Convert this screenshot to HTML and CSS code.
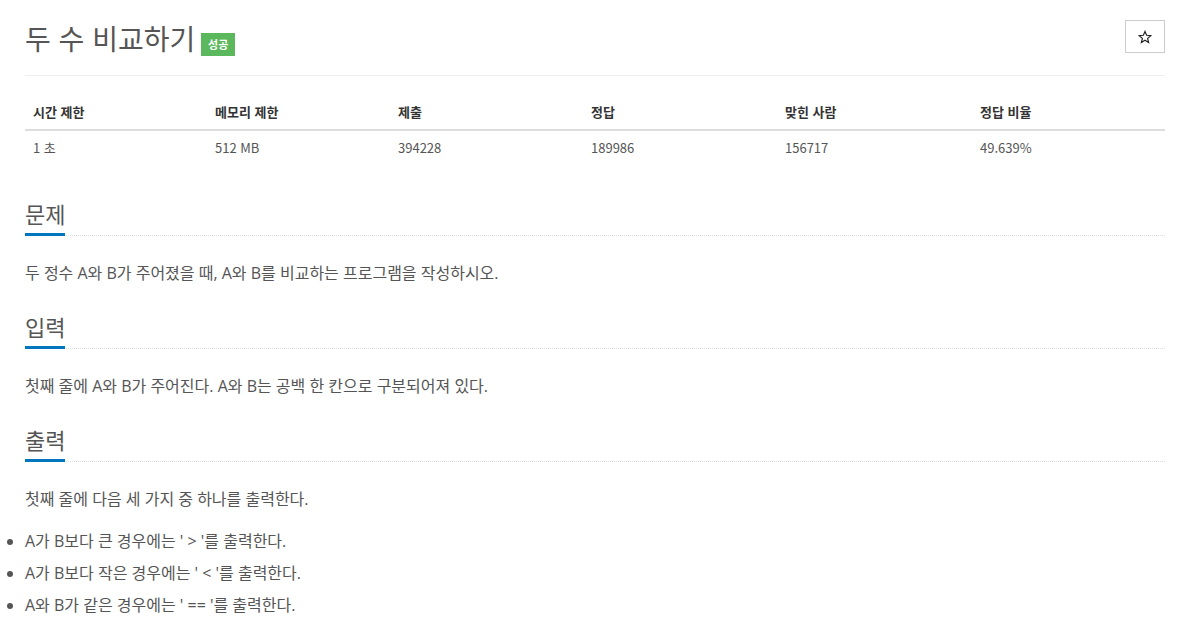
FILE: index.html
```html
<!DOCTYPE html>
<html lang="ko">
<head>
<meta charset="utf-8">
<title>두 수 비교하기</title>
<link rel="stylesheet" href="styles.css">
</head>
<body>
<div class="container">
  <div class="page-header">
    <h1 class="title">두 수 비교하기 <span class="badge">성공</span></h1>
    <button class="star-btn" type="button" aria-label="star">
      <svg width="14" height="14" viewBox="0 0 24 24"><path d="M12 2.5l2.8 6.6 7.2.6-5.5 4.7 1.7 7-6.2-3.8-6.2 3.8 1.7-7L2 9.7l7.2-.6z" fill="none" stroke="#222" stroke-width="2" stroke-linejoin="miter"/></svg>
    </button>
  </div>
  <table class="info">
    <thead>
      <tr><th class="c1">시간 제한</th><th class="c2">메모리 제한</th><th class="c3">제출</th><th class="c4">정답</th><th class="c5">맞힌 사람</th><th class="c6">정답 비율</th></tr>
    </thead>
    <tbody>
      <tr><td>1 초</td><td>512 MB</td><td>394228</td><td>189986</td><td>156717</td><td>49.639%</td></tr>
    </tbody>
  </table>

  <section class="sec first">
    <div class="headline"><h2>문제</h2></div>
    <p>두 정수 A와 B가 주어졌을 때, A와 B를 비교하는 프로그램을 작성하시오.</p>
  </section>
  <section class="sec">
    <div class="headline"><h2>입력</h2></div>
    <p>첫째 줄에 A와 B가 주어진다. A와 B는 공백 한 칸으로 구분되어져 있다.</p>
  </section>
  <section class="sec">
    <div class="headline"><h2>출력</h2></div>
    <p>첫째 줄에 다음 세 가지 중 하나를 출력한다.</p>
    <ul>
      <li>A가 B보다 큰 경우에는 '&nbsp;&gt;&nbsp;'를 출력한다.</li>
      <li>A가 B보다 작은 경우에는 '&nbsp;&lt;&nbsp;'를 출력한다.</li>
      <li>A와 B가 같은 경우에는 '&nbsp;==&nbsp;'를 출력한다.</li>
    </ul>
  </section>
</div>
</body>
</html>
```

FILE: styles.css
```css
html, body {
  margin: 0;
  padding: 0;
  background: #fff;
}
body {
  font-family: "Open Sans", "Noto Sans CJK KR", sans-serif;
  color: #555;
  font-size: 14px;
}
.container {
  width: 1140px;
  margin: 0 0 0 25px;
  display: flex;
  flex-direction: column;
}
.page-header {
  display: flex;
  justify-content: space-between;
  align-items: flex-start;
  padding-top: 20px;
  padding-bottom: 19px;
  border-bottom: 1px solid #eee;
}
.title {
  margin: 0;
  font-size: 28px;
  font-weight: 400;
  line-height: 36px;
  color: #555;
  font-family: "Noto Sans CJK KR", sans-serif;
}
.badge {
  display: inline-block;
  vertical-align: 1px;
  background: #5cb85c;
  color: #fff;
  font-size: 11px;
  font-weight: 700;
  line-height: 23px;
  padding: 0 7px;
  margin-left: -2px;
}
.star-btn {
  display: flex;
  align-items: center;
  justify-content: center;
  width: 40px;
  height: 33px;
  border: 1px solid #ccc;
  background: #fff;
  padding: 0;
}
.info {
  width: 100%;
  border-collapse: collapse;
  margin-top: 18px;
  font-family: "Noto Sans CJK KR", sans-serif;
}
.info th, .info td {
  text-align: left;
  padding: 8px;
  line-height: 20px;
  font-size: 13px;
}
.info th {
  color: #333;
  font-weight: 700;
  padding-bottom: 7px;
  border-bottom: 2px solid #ddd;
}
.info td {
  color: #555;
  padding-top: 7px;
}
.c1 { width: 166px; }
.c2 { width: 167px; }
.c3 { width: 177px; }
.c4 { width: 178px; }
.c5 { width: 179px; }
.sec { margin-top: 21px; }
.sec.first { margin-top: 30px; }
.headline {
  border-bottom: 1px dotted #ddd;
  margin-bottom: 22px;
}
.headline h2 {
  display: inline-block;
  margin: 0 0 -1px 0;
  font-size: 22px;
  font-weight: 400;
  line-height: 34px;
  padding-bottom: 3px;
  border-bottom: 3px solid #0076c0;
  color: #555;
  font-family: "Noto Sans CJK KR", sans-serif;
}
.sec p {
  margin: 0;
  font-size: 16px;
  line-height: 30px;
}
.sec ul {
  margin: 11px 0 0;
  padding-left: 0;
  list-style-position: outside;
}
.sec li {
  font-size: 16px;
  line-height: 32px;
}
```
